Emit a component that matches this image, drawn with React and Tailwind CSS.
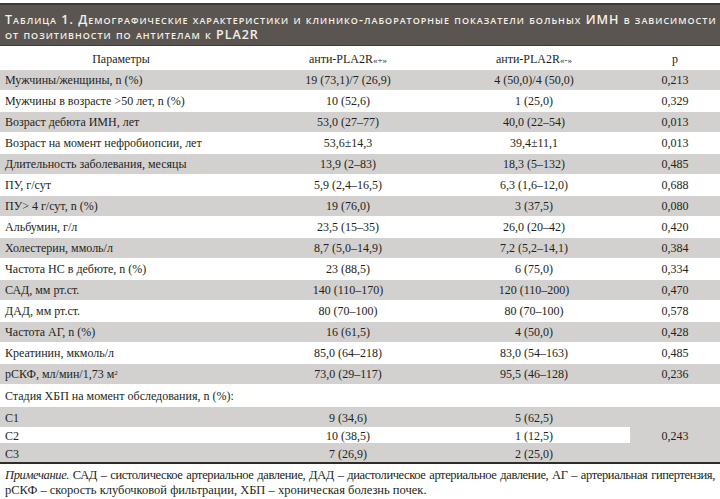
const rows = [
  ['Мужчины/женщины, n (%)', '19 (73,1)/7 (26,9)', '4 (50,0)/4 (50,0)', '0,213'],
  ['Мужчины в возрасте >50 лет, n (%)', '10 (52,6)', '1 (25,0)', '0,329'],
  ['Возраст дебюта ИМН, лет', '53,0 (27–77)', '40,0 (22–54)', '0,013'],
  ['Возраст на момент нефробиопсии, лет', '53,6±14,3', '39,4±11,1', '0,013'],
  ['Длительность заболевания, месяцы', '13,9 (2–83)', '18,3 (5–132)', '0,485'],
  ['ПУ, г/сут', '5,9 (2,4–16,5)', '6,3 (1,6–12,0)', '0,688'],
  ['ПУ> 4 г/сут, n (%)', '19 (76,0)', '3 (37,5)', '0,080'],
  ['Альбумин, г/л', '23,5 (15–35)', '26,0 (20–42)', '0,420'],
  ['Холестерин, ммоль/л', '8,7 (5,0–14,9)', '7,2 (5,2–14,1)', '0,384'],
  ['Частота НС в дебюте, n (%)', '23 (88,5)', '6 (75,0)', '0,334'],
  ['САД, мм рт.ст.', '140 (110–170)', '120 (110–200)', '0,470'],
  ['ДАД, мм рт.ст.', '80 (70–100)', '80 (70–100)', '0,578'],
  ['Частота АГ, n (%)', '16 (61,5)', '4 (50,0)', '0,428'],
  ['Креатинин, мкмоль/л', '85,0 (64–218)', '83,0 (54–163)', '0,485'],
  [<>рСКФ, мл/мин/1,73 м<sup className="text-[7px]">2</sup></>, '73,0 (29–117)', '95,5 (46–128)', '0,236'],
];

const stages = [
  ['С1', '9 (34,6)', '5 (62,5)', 'h-[20px] bg-[#d3d1d0]'],
  ['С2', '10 (38,5)', '1 (12,5)', 'h-[16px] bg-white'],
  ['С3', '7 (26,9)', '2 (25,0)', 'h-[19px] bg-[#d3d1d0]'],
];

const grid = 'grid grid-cols-[242px_212px_176px_90px] items-center';

export default function App() {
  return (
    <div className="w-[720px] h-[499px] bg-white text-[#231f20] overflow-hidden" style={{ fontFamily: '"Liberation Serif", "Times New Roman", serif' }}>
      {/* Title band */}
      <div className="mt-[3px] h-[43px] bg-[#5a5550] border-t-2 border-b border-[#3e3a36] px-[5px] pt-[7px] text-[#f4f1ea] text-[12.5px] leading-[15px] font-semibold tracking-[0.08em] [font-variant:small-caps]" style={{ fontFamily: '"Open Sans", "DejaVu Sans", sans-serif' }}>
        <div className="whitespace-nowrap text-justify [text-align-last:justify]">Таблица 1. Демографические характеристики и клинико-лабораторные показатели больных ИМН в зависимости</div>
        <div className="whitespace-nowrap">от позитивности по антителам к PLA2R</div>
      </div>

      <div className="text-[12px] leading-none">
        {/* Column header */}
        <div className={`${grid} h-[24px] pt-[2px]`}>
          <div className="text-center">Параметры</div>
          <div className="text-center">анти-PLA2R<span className="text-[9px]">«+»</span></div>
          <div className="text-center pr-[16px]">анти-PLA2R<span className="text-[9px]">«-»</span></div>
          <div className="text-center">p</div>
        </div>

        {rows.map((r, i) => (
          <div key={i} className={`${grid} ${i % 2 === 0 ? 'h-[20px] bg-[#d3d1d0]' : 'h-[22px] bg-white'}`}>
            <div className="pl-[5px] whitespace-nowrap">{r[0]}</div>
            <div className="text-center">{r[1]}</div>
            <div className="text-center pr-[16px]">{r[2]}</div>
            <div className="text-center">{r[3]}</div>
          </div>
        ))}

        <div className="h-[23px] flex items-center pl-[5px]">Стадия ХБП на момент обследования, n (%):</div>

        {/* Stages with merged p */}
        <div className="grid grid-cols-[630px_90px] border-b-2 border-[#2f2b27]">
          <div>
            {stages.map((s, i) => (
              <div key={i} className={`grid grid-cols-[242px_212px_176px] items-center pt-[2px] ${s[3]}`}>
                <div className="pl-[5px]">{s[0]}</div>
                <div className="text-center">{s[1]}</div>
                <div className="text-center pr-[16px]">{s[2]}</div>
              </div>
            ))}
          </div>
          <div className="bg-[#d3d1d0] flex items-center justify-center pt-[2px]">0,243</div>
        </div>

        {/* Note */}
        <div className="px-[5px] pt-[4px] text-[12.5px] leading-[15px]">
          <div className="whitespace-nowrap text-justify [text-align-last:justify] tracking-[-0.03em]">
            <i>Примечание.</i> САД – систолическое артериальное давление, ДАД – диастолическое артериальное давление, АГ – артериальная гипертензия,
          </div>
          <div>рСКФ – скорость клубочковой фильтрации, ХБП – хроническая болезнь почек.</div>
        </div>
      </div>
    </div>
  );
}
